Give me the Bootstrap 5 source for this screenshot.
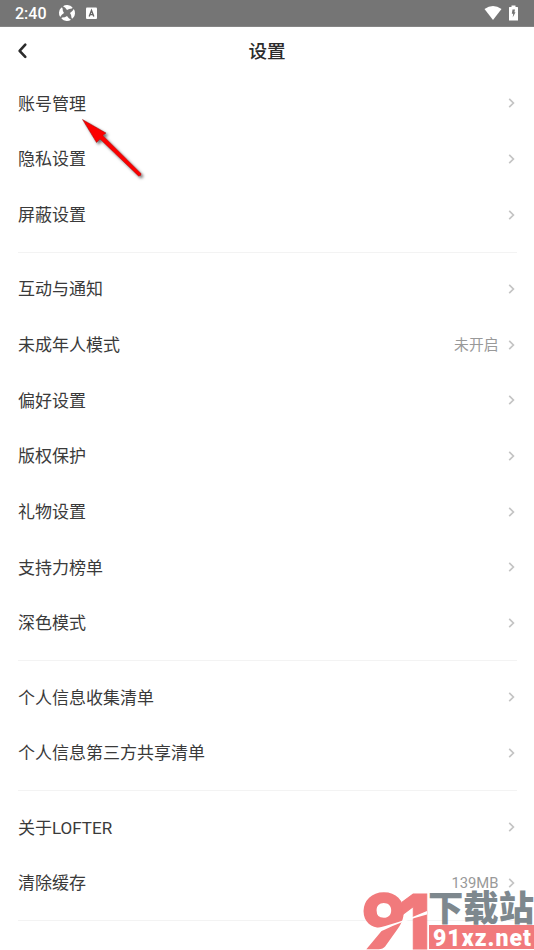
<!DOCTYPE html>
<html lang="zh-CN">
<head>
<meta charset="utf-8">
<meta name="viewport" content="width=device-width, initial-scale=1">
<title>设置</title>
<link href="https://cdn.jsdelivr.net/npm/bootstrap@5.3.0/dist/css/bootstrap.min.css" rel="stylesheet">
<style>
  body { font-family: Roboto, "Noto Sans CJK SC", sans-serif; color: #3a3a3a; background: #fff; }
  .screen { width: 534px; height: 950px; }
  .statusbar { height: 27px; background: #757575; border-bottom: 1px solid #858585; padding: 0 16px 0 15px; }
  .clock { font-size: 16px; font-weight: 500; line-height: 27px; width: 43px; padding-top: 1px; }
  .titlebar { height: 48.9px; padding: 0 17px; }
  .titlebar h1 { font-size: 18.6px; font-weight: 500; line-height: 48px; color: #2b2b2b; padding-top: 1px; }
  .side { width: 16px; }
  .group { padding: 0 18px; }
  .group .item { height: 55.7px; font-size: 17px; line-height: 24px; }
  .group .value { font-size: 14.8px; color: #999; margin-right: 9.5px; }
  .rule { height: 18.57px; margin: 0 17px 0 18px; }
  .rule::before { content: ""; height: 1px; width: 100%; background: #f3f3f3; }
  .chev { width: 8px; height: 12px; margin-top: -1px; fill: none; stroke: #c4c4c4; stroke-width: 1.7; }
  .pointer { left: 70px; top: 108px; }
  .brand { left: 360px; top: 876px; overflow: visible; }
  .brand .cjk { font-family: "Noto Sans CJK SC", sans-serif; font-weight: 900; }
  .brand .nine { font-family: Lato, sans-serif; font-weight: 900; }
  .brand .one { font-family: Inter, sans-serif; font-weight: 900; }
  .brand .url { font-family: Roboto, sans-serif; font-weight: 900; }
</style>
</head>
<body>
<div class="screen position-relative overflow-hidden">
  <header class="statusbar d-flex align-items-center text-white">
    <span class="clock">2:40</span>
    <svg width="18" height="18" viewBox="0 0 18 18"><g fill="#fff"><path id="blade" d="M5 2.200Q7 .8 9.500 1Q12.800 1.200 14.300 3.200Q15 4.300 13.800 4.500Q11 4.500 9 6Q7.500 3.500 5 2.200Z"/><use href="#blade" transform="rotate(90 9 9)"/><use href="#blade" transform="rotate(180 9 9)"/><use href="#blade" transform="rotate(270 9 9)"/></g></svg>
    <svg class="ms-2" width="14" height="14" viewBox="0 0 14 14"><rect x="2" y="1.500" width="11" height="11.500" rx="1" fill="#fff"/><path d="M5.200 10.500L7.500 4.500L9.800 10.500M6 8.600H9" fill="none" stroke="#666" stroke-width="1.400"/></svg>
    <svg class="ms-auto" style="margin-right:7px" width="18" height="16" viewBox="0 0 18 16"><path d="M.5 4Q9-1.800 17.500 4L9 15Z" fill="#fff"/></svg>
    <svg width="9" height="16" viewBox="0 0 9 16"><path d="M0 2.500Q0 2 .6 2H2.500V.5H6.500V2H8.400Q9 2 9 2.500V15.500H0Z" fill="#fff"/><path d="M3.500 4.500H6L5.400 7.200H6.500L3.700 12.500L4.200 8.800H2.800Z" fill="#757575"/></svg>
  </header>

  <div class="titlebar d-flex align-items-center justify-content-between">
    <svg class="side" height="20" viewBox="0 0 16 20"><path d="M8.300 3.700L2.600 9.900L8.300 15.900" fill="none" stroke="#2b2b2b" stroke-width="2.600" stroke-linecap="round" stroke-linejoin="round"/></svg>
    <h1 class="m-0">设置</h1>
    <span class="side"></span>
  </div>

  <main>
    <div class="group">
      <div class="item d-flex align-items-center"><span class="me-auto">账号管理</span><svg class="chev" viewBox="0 0 8 12"><path id="c" d="M1.200 1.900L5.400 6L1.200 10.100"/></svg></div>
      <div class="item d-flex align-items-center"><span class="me-auto">隐私设置</span><svg class="chev" viewBox="0 0 8 12"><use href="#c"/></svg></div>
      <div class="item d-flex align-items-center"><span class="me-auto">屏蔽设置</span><svg class="chev" viewBox="0 0 8 12"><use href="#c"/></svg></div>
    </div>
    <div class="rule d-flex align-items-center"></div>
    <div class="group">
      <div class="item d-flex align-items-center"><span class="me-auto">互动与通知</span><svg class="chev" viewBox="0 0 8 12"><use href="#c"/></svg></div>
      <div class="item d-flex align-items-center"><span class="me-auto">未成年人模式</span><span class="value">未开启</span><svg class="chev" viewBox="0 0 8 12"><use href="#c"/></svg></div>
      <div class="item d-flex align-items-center"><span class="me-auto">偏好设置</span><svg class="chev" viewBox="0 0 8 12"><use href="#c"/></svg></div>
      <div class="item d-flex align-items-center"><span class="me-auto">版权保护</span><svg class="chev" viewBox="0 0 8 12"><use href="#c"/></svg></div>
      <div class="item d-flex align-items-center"><span class="me-auto">礼物设置</span><svg class="chev" viewBox="0 0 8 12"><use href="#c"/></svg></div>
      <div class="item d-flex align-items-center"><span class="me-auto">支持力榜单</span><svg class="chev" viewBox="0 0 8 12"><use href="#c"/></svg></div>
      <div class="item d-flex align-items-center"><span class="me-auto">深色模式</span><svg class="chev" viewBox="0 0 8 12"><use href="#c"/></svg></div>
    </div>
    <div class="rule d-flex align-items-center"></div>
    <div class="group">
      <div class="item d-flex align-items-center"><span class="me-auto">个人信息收集清单</span><svg class="chev" viewBox="0 0 8 12"><use href="#c"/></svg></div>
      <div class="item d-flex align-items-center"><span class="me-auto">个人信息第三方共享清单</span><svg class="chev" viewBox="0 0 8 12"><use href="#c"/></svg></div>
    </div>
    <div class="rule d-flex align-items-center"></div>
    <div class="group">
      <div class="item d-flex align-items-center"><span class="me-auto">关于LOFTER</span><svg class="chev" viewBox="0 0 8 12"><use href="#c"/></svg></div>
      <div class="item d-flex align-items-center"><span class="me-auto">清除缓存</span><span class="value">139MB</span><svg class="chev" viewBox="0 0 8 12"><use href="#c"/></svg></div>
    </div>
    <div class="rule d-flex align-items-center"></div>
  </main>

  <!-- red pointer over the first rows -->
  <svg class="pointer position-absolute" width="90" height="80" viewBox="70 108 90 80">
    <defs><filter id="sh" x="-20%" y="-20%" width="150%" height="150%"><feDropShadow dx="2" dy="2" stdDeviation="1.800" flood-color="#000" flood-opacity=".55"/></filter></defs>
    <path d="M82.500 119.500L106 133L102.800 135.500L141 173.500Q141.500 176 138.500 176L100 139L96.500 142.500Z" fill="#fc0000" stroke="#8c1c1c" stroke-width=".5" filter="url(#sh)"/>
  </svg>

  <!-- site brand -->
  <svg class="brand position-absolute" width="174" height="74" viewBox="360 876 174 74">
    <g fill="#f17a7c" stroke="#f17a7c">
      <text class="nine" x="362" y="948" font-size="75" stroke-width="2.500" textLength="44" lengthAdjust="spacingAndGlyphs">9</text>
      <text class="one" x="399" y="949" font-size="75" stroke-width="1" textLength="31" lengthAdjust="spacingAndGlyphs">1</text>
    </g>
    <path d="M368 930.500Q400 923 427 911V914.500Q402 921 384 930L368 936Z" fill="#fff"/>
    <text class="cjk" x="428" y="921" font-size="35.500" fill="#7e888e" textLength="106" lengthAdjust="spacingAndGlyphs">下载站</text>
    <rect x="429" y="925" width="105" height="24" fill="#f17a7c"/>
    <text class="url" x="433" y="945.500" font-size="23" fill="#fff" textLength="98">91xz.net</text>
  </svg>
</div>
<script src="https://cdn.jsdelivr.net/npm/bootstrap@5.3.0/dist/js/bootstrap.bundle.min.js"></script>
</body>
</html>
